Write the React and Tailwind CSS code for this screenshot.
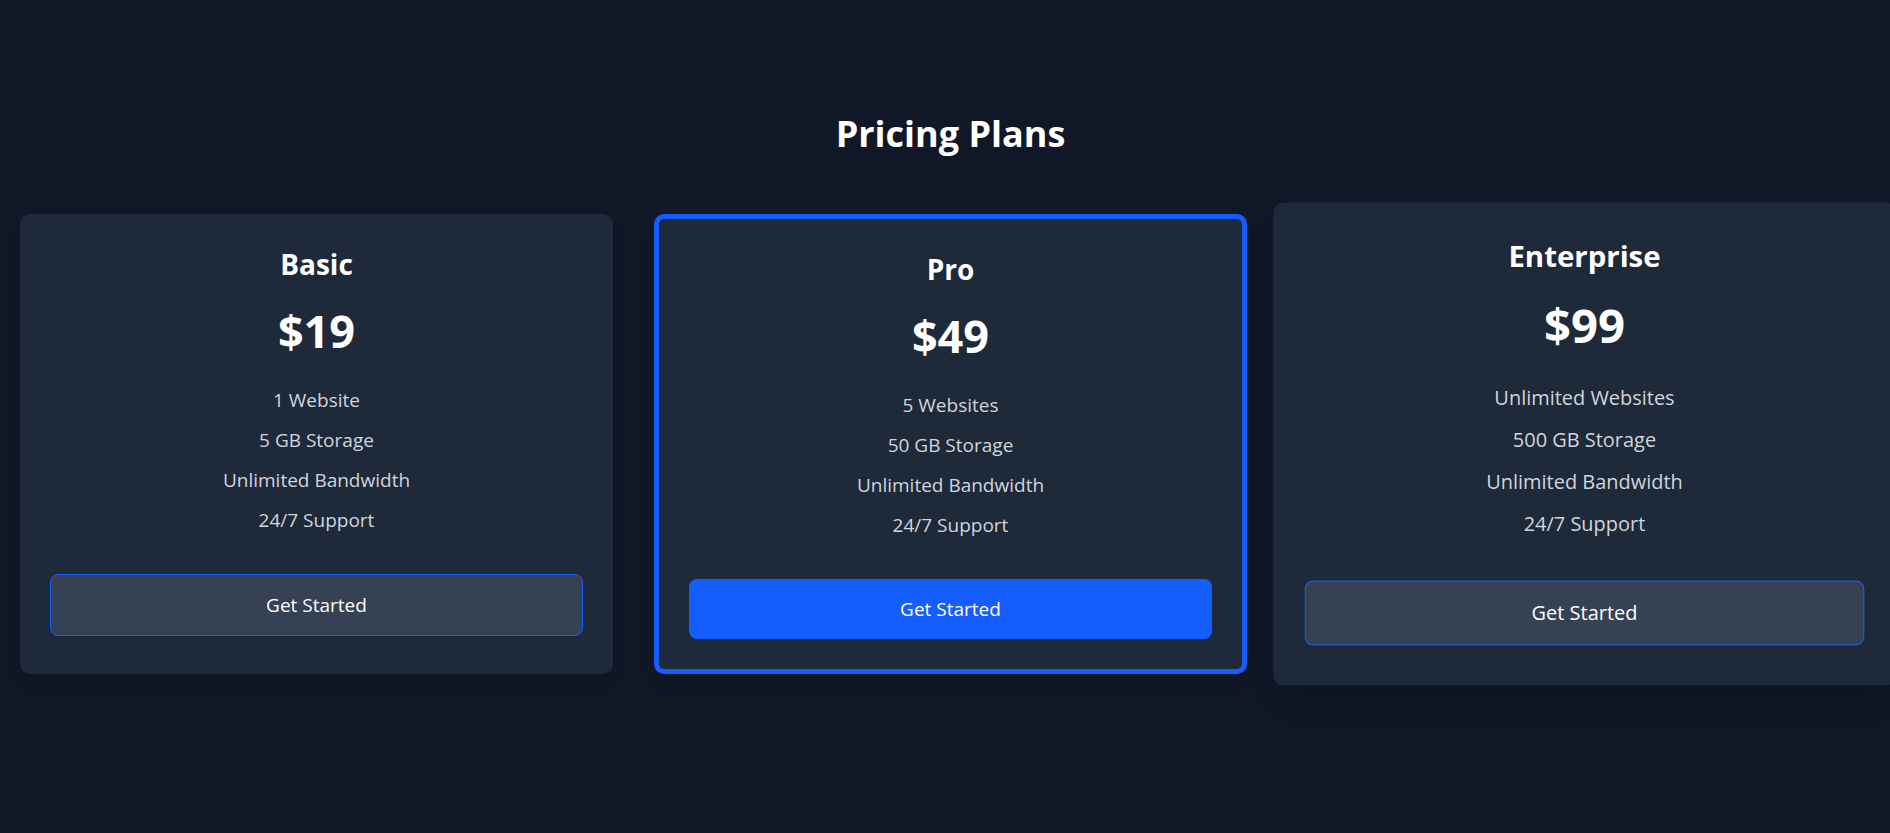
import React from "react";

const plans = [
  {
    name: "Basic",
    price: "$19",
    features: ["1 Website", "5 GB Storage", "Unlimited Bandwidth", "24/7 Support"],
    variant: "basic",
  },
  {
    name: "Pro",
    price: "$49",
    features: ["5 Websites", "50 GB Storage", "Unlimited Bandwidth", "24/7 Support"],
    variant: "pro",
  },
  {
    name: "Enterprise",
    price: "$99",
    features: ["Unlimited Websites", "500 GB Storage", "Unlimited Bandwidth", "24/7 Support"],
    variant: "enterprise",
  },
];

function Card({ plan }) {
  const isPro = plan.variant === "pro";
  const isEnt = plan.variant === "enterprise";
  return (
    <div
      className={
        isPro
          ? "rounded-[10px] bg-gray-800 p-[30px] text-center shadow-lg border-[5px] border-blue-600"
          : isEnt
          ? "rounded-[10px] bg-gray-800 p-[30px] text-center shadow-xl scale-105"
          : "rounded-[10px] bg-gray-800 p-[30px] text-center shadow-lg"
      }
    >
      <h3 className="mb-[22px] text-[28px] font-bold leading-[40px] text-white">{plan.name}</h3>
      <p className="mb-[29px] text-[45px] font-bold leading-[50px] text-white">{plan.price}</p>
      <ul className="mb-[39px] flex flex-col gap-[10px]">
        {plan.features.map((f) => (
          <li key={f} className="text-[19px] leading-[30px] text-gray-300">
            {f}
          </li>
        ))}
      </ul>
      <button
        className={
          isPro
            ? "w-full rounded-[8px] bg-blue-600 py-[15px] text-[19px] leading-[30px] text-white"
            : "w-full rounded-[8px] border border-blue-600 bg-gray-700 py-[15px] text-[19px] leading-[30px] text-white"
        }
      >
        Get Started
      </button>
    </div>
  );
}

export default function App() {
  return (
    <div
      className="min-h-screen overflow-hidden bg-gray-900 pt-[111px]"
      style={{ fontFamily: '"Open Sans", "Noto Sans", sans-serif' }}
    >
      <div className="ml-5 w-[1861px]">
        <h1 className="mb-[58px] text-center text-[36px] font-bold leading-[45px] text-white">
          Pricing Plans
        </h1>
        <div className="grid grid-cols-3 gap-[41px]">
          {plans.map((p) => (
            <Card key={p.name} plan={p} />
          ))}
        </div>
      </div>
    </div>
  );
}
